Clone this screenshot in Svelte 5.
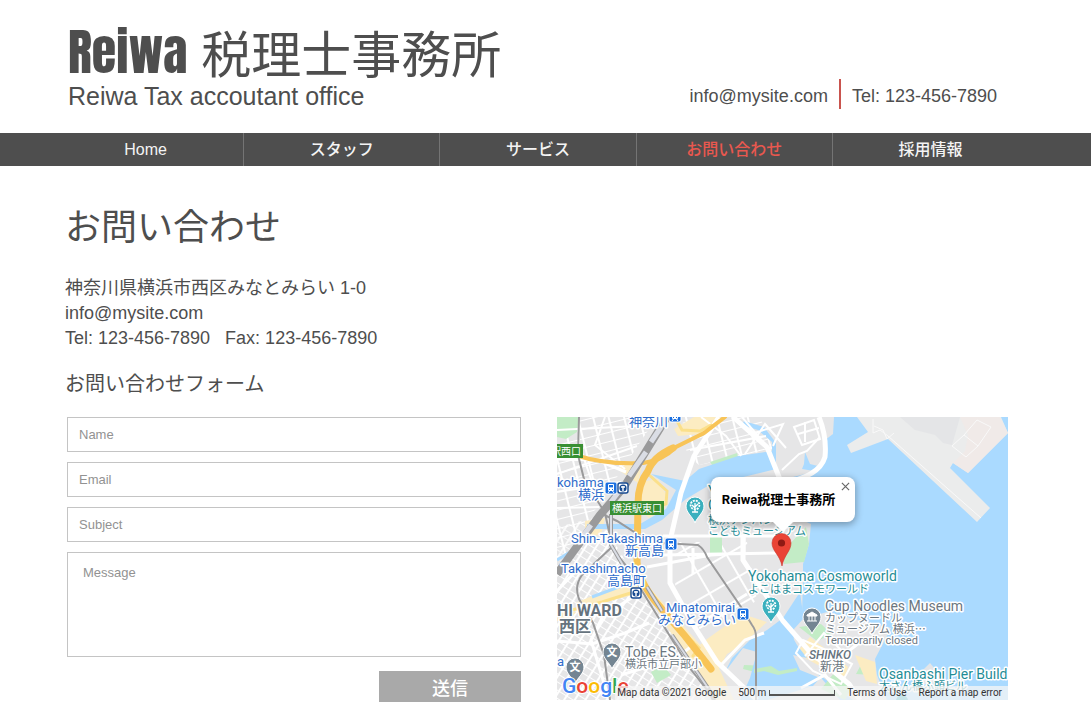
<script lang="ts">
  // Contact page for the tax office: header, main nav, address, form and map.
  const navItems = [
    { label: 'Home', href: '#home' },
    { label: 'スタッフ', href: '#staff' },
    { label: 'サービス', href: '#services' },
    { label: 'お問い合わせ', href: '#contact' },
    { label: '採用情報', href: '#recruit' },
  ];
  const current = '#contact';

  // Map labels, in the map's own 451 x 283 units.
  const labels = [
    { x: 72, y: 9, kind: 'station', size: 13, text: '神奈川' },
    { x: 0, y: 70, kind: 'station', size: 13, text: 'kohama' },
    { x: 21, y: 82, kind: 'station', size: 13, text: '横浜' },
    { x: 14, y: 126, kind: 'station', size: 13, text: 'Shin-Takashima' },
    { x: 68, y: 138, kind: 'station', size: 13, text: '新高島' },
    { x: 4, y: 156, kind: 'station', size: 13, text: 'Takashimacho' },
    { x: 50, y: 168, kind: 'station', size: 13, text: '高島町' },
    { x: 109, y: 195, kind: 'station', size: 13, text: 'Minatomirai' },
    { x: 101, y: 207, kind: 'station', size: 13, text: 'みなとみらい' },
    { x: 0, y: 249, kind: 'station', size: 13, text: 'a' },
    { x: 0, y: 199, kind: 'ward', size: 16, text: 'HI WARD' },
    { x: 2, y: 215, kind: 'ward', size: 16, text: '西区' },
    { x: 68, y: 240, kind: 'place', size: 14, text: 'Tobe ES.' },
    { x: 68, y: 251, kind: 'place', size: 11, text: '横浜市立戸部小' },
    { x: 151, y: 79, kind: 'sight', size: 14, text: 'Y' },
    { x: 151, y: 93, kind: 'sight', size: 14, text: 'C' },
    { x: 151, y: 107, kind: 'sight', size: 11, text: '横浜アンパンマン' },
    { x: 151, y: 118, kind: 'sight', size: 11, text: 'こどもミュージアム' },
    { x: 191, y: 164, kind: 'sight', size: 14, text: 'Yokohama Cosmoworld' },
    { x: 191, y: 176, kind: 'sight', size: 11, text: 'よこはまコスモワールド' },
    { x: 268, y: 194, kind: 'place', size: 14, text: 'Cup Noodles Museum' },
    { x: 268, y: 205, kind: 'place', size: 11, text: 'カップヌードル' },
    { x: 268, y: 216, kind: 'place', size: 11, text: 'ミュージアム 横浜⋯' },
    { x: 268, y: 227, kind: 'place', size: 11, text: 'Temporarily closed' },
    { x: 252, y: 242, kind: 'district', size: 12, text: 'SHINKO' },
    { x: 263, y: 254, kind: 'place', size: 12, text: '新港' },
    { x: 322, y: 262, kind: 'sight', size: 14, text: 'Osanbashi Pier Build' },
    { x: 322, y: 273, kind: 'sight', size: 11, text: '大さん橋ふ頭ビル' },
  ];

  const stations = [
    { x: 118, y: -1 },
    { x: 54, y: 71 },
    { x: 114, y: 127 },
    { x: 186, y: 197 },
  ];
  const subways = [
    { x: 66, y: 71 },
    { x: 79, y: 176 },
  ];

  let popupOpen = $state(true);
</script>

<div class="page">
  <header class="bar">
    <div class="inner head">
      <div class="brand">
        <div class="name"><span class="latin">Reiwa</span> 税理士事務所</div>
        <div class="tagline">Reiwa Tax accoutant office</div>
      </div>
      <div class="contact">
        <a href="mailto:info@mysite.com">info@mysite.com</a>
        <span class="tel">Tel: 123-456-7890</span>
      </div>
    </div>
  </header>

  <nav class="bar">
    <ul class="inner">
      {#each navItems as item}
        <li>
          <a href={item.href} class:active={item.href === current}>{item.label}</a>
        </li>
      {/each}
    </ul>
  </nav>

  <main class="bar">
    <div class="inner">
      <div class="intro">
        <h1>お問い合わせ</h1>
        <address>
          神奈川県横浜市西区みなとみらい 1-0<br />
          <a href="mailto:info@mysite.com">info@mysite.com</a><br />
          Tel: 123-456-7890 &nbsp; Fax: 123-456-7890
        </address>
        <h2>お問い合わせフォーム</h2>
      </div>

      <div class="columns">
        <form onsubmit={(e) => e.preventDefault()}>
          <input type="text" placeholder="Name" aria-label="Name" />
          <input type="email" placeholder="Email" aria-label="Email" />
          <input type="text" placeholder="Subject" aria-label="Subject" />
          <textarea placeholder="Message" aria-label="Message"></textarea>
          <button class="send" type="submit">送信</button>
        </form>

        <section class="map" aria-label="Map">
          <svg class="canvas" viewBox="0 0 451 283">
            <defs>
              <pattern id="streets" width="15" height="9" patternUnits="userSpaceOnUse" patternTransform="rotate(-14)">
                <path d="M0 0H15M5 0V9" stroke="#fff" stroke-width="2" fill="none" />
              </pattern>
              <pattern id="alleys" width="9" height="7" patternUnits="userSpaceOnUse" patternTransform="rotate(32)">
                <path d="M0 0H9M3 0V7" stroke="#fff" stroke-width="2" fill="none" />
              </pattern>
              <pattern id="blocks" width="34" height="25" patternUnits="userSpaceOnUse" patternTransform="rotate(-30)">
                <path d="M0 4H34M10 0V25" stroke="#fff" stroke-width="2" fill="none" />
              </pattern>
              <symbol id="tree" viewBox="0 0 20 28">
                <path
                  d="M10 27C8 21 1 17 1 10a9 9 0 0 1 18 0c0 7-7 11-9 17z"
                  fill="#3bb0be"
                  stroke="#fff"
                />
                <g fill="none" stroke="#fff">
                  <circle cx="10" cy="9" r="4.4" stroke-width="1.8" stroke-dasharray="2 1" />
                  <path d="M10 16V7M10 12l-3-3M10 11l3-3M7 16h6" stroke-width="1.3" />
                </g>
              </symbol>
              <symbol id="pin-grey" viewBox="0 0 20 28">
                <path
                  d="M10 27C8 21 1 17 1 10a9 9 0 0 1 18 0c0 7-7 11-9 17z"
                  fill="#748592"
                  stroke="#fff"
                />
              </symbol>
            </defs>

            <rect width="451" height="283" fill="#aadaff" />

            <!-- Land -->
            <path
              fill="#e6e6e7"
              d="M0 0H277L276 17 268 23 270 40 256 55 236 60 245 103 254 107 252 127 246 147 246 165 245 197 232 208 236 228 283 283H0z"
            />
            <path
              fill="#e6e6e7"
              d="M237 212L246 202 270 195 334 211 318 242 320 258 330 283H296L236 238z"
            />
            <path
              fill="#ebecec"
              d="M300 0L311 15 290 28 294 36 331 22 420 105 433 91 393 51 396 46 411 56 451 16 444 0z"
            />
            <path fill="#e4e5e7" d="M343 0H403L395 28 386 26 378 18 358 13z" />
            <path fill="#f0eae8" d="M403 0H443L451 16 411 56 396 46 408 34 411 18z" />
            <path fill="#e4e5e7" d="M366 253L373 246 379 253 376 267H366z" />

            <path fill="url(#streets)" d="M0 0H100L0 150zM125 0H203L216 32 142 48 130 38z" />
            <path fill="url(#alleys)" d="M0 153L25 120 50 113 90 180 150 270 155 283H0z" />
            <path fill="url(#blocks)" d="M119 125H190L200 183 150 222 118 178z" />
            <path fill="url(#alleys)" d="M0 110L48 98 40 110 0 147z" opacity=".8" />

            <!-- Parks -->
            <g fill="#c3ecc6">
              <path d="M0 0H22L20 15 9 22 0 20zM153 45L180 36 184 51 160 55zM249 110L252 127 247 145 227 147 226 134z" />
              <path d="M153 120H165V136H153zM242 210L264 207 275 217 260 224zM94 255L106 248 114 258 100 266z" />
              <path d="M264 272L278 255 294 272 288 283zM187 248L236 250 239 256 214 259 186 252zM299 257L307 242 317 246 315 258z" />
            </g>

            <!-- Commercial blocks -->
            <g fill="#fcecc2">
              <path d="M83 65L101 62 109 78 108 91 92 101 84 94zM117 12L137 0H164L143 17 121 19zM60 52L87 39 81 66z" />
              <path d="M150 222L185 197 210 205 185 228 170 237 161 253 138 232zM253 220L270 233 291 250 288 260 270 253 239 236z" />
              <path d="M86 163L160 247 177 283H158L105 202zM28 104L48 101 44 118 28 118zM298 238L318 245 320 267 309 264z" />
              <path d="M18 186L75 163 83 168 76 178 29 190zM0 193L19 195 11 205 0 204z" />
            </g>

            <!-- Harbour and canals -->
            <path
              fill="#aadaff"
              d="M94 57L128 64 142 52 181 39 215 34 215 25 201 13 185 8 187 4 207 10 219 26 219 52 178 62 154 67 129 82 105 103 88 112 31 112 30 107 83 107 109 92 119 73z"
            />
            <path
              fill="#aadaff"
              d="M243 175L246 197 230 210 240 228 250 241 236 238 243 253 263 261 256 269 210 283H183L193 261 200 235 186 231 168 255 175 241 193 223 210 213 226 201z"
            />
            <path fill="#aadaff" d="M248 35L253 47 261 49 257 54 245 52 247 47z" />
            <path
              d="M35 180L67 168M0 143L23 129"
              stroke="#aadaff"
              stroke-width="3"
              fill="none"
            />
            <path fill="#c3ecc6" d="M197 252L214 249 222 254 240 251 240 254 221 258 207 254 197 256z" />

            <!-- Local roads -->
            <g fill="none" stroke="#fff">
              <path stroke-width="2" d="M0 13L100 8M0 57L80 29M0 75L64 65M22 0V27L47 100M48 0L38 28 68 52M0 91L42 90" />
              <path stroke-width="2" d="M133 33L209 19M144 0L169 19 184 39M188 37L208 7 229 31M194 17L226 7 216 29M185 0L212 32" />
              <path stroke-width="2" d="M237 10L257 3 263 22 245 28zM248 5V25M241 17L262 11M225 53L242 37 250 34 262 21" />
              <path stroke-width="2" d="M239 236L246 223 269 233 295 247 284 267 256 254zM248 239L267 216 285 234" />
              <path stroke-width="3" d="M106 119H225V108M105 138L220 136M136 131V157M90 150L154 138 187 136V120" />
              <path stroke-width="5" d="M162 0L137 39 124 76 113 124 113 166 137 209 160 245 200 283" />
              <path stroke-width="5" stroke-linejoin="round" d="M176 0L210 30 226 70M262 0Q270 20 268 40 262 60 225 66" />
              <path stroke-width="5" d="M186 120V143L226 204 253 235 292 267 303 283" />
              <path stroke-width="3" d="M137 210L190 177M164 248L188 223 207 216M0 42L40 43 69 55M18 155L0 174M76 180L46 199 34 223 52 283" />
              <path stroke-width="3" d="M284 240L302 226M244 271L268 258 284 278M0 224L35 227 68 216 92 206M64 258L119 241 139 226" />
            </g>
            <g fill="none" stroke="#f9f9f9">
              <path d="M316 2V16L323 13 331 19 424 101M317 9L326 13 330 22 337 16M395 29L407 18 421 29 409 40zM407 18L420 3 434 10 421 29" />
            </g>

            <!-- Highways -->
            <g fill="none" stroke-linecap="round">
              <path stroke="#fbe08b" stroke-width="3" d="M118 0L125 13 143 14 154 8M83 96L109 87 110 74 91 57M127 216L142 231 136 239M80 174L45 185 15 193" />
              <path stroke="#f8c457" stroke-width="4" d="M18 38Q49 48 86 46Q105 44 119 30L147 16 168 0" />
              <path stroke="#f8c457" stroke-width="7" d="M116 31Q96 40 91 54Q81 67 81 86L80 145Q81 162 98 184L128 219 154 252" />
            </g>

            <!-- Railways -->
            <g fill="none">
              <path stroke="#9a9a9b" stroke-width="8" d="M110 0L67 70 43 98 0 157" />
              <path stroke="#dadde5" stroke-width="5" d="M104 10L94 25M89 35L72 59M68 66L54 85M34 108L20 127" />
              <path stroke="#9a9a9b" stroke-width="2" d="M22 0L21 38 27 62 48 96 56 133 71 151 90 182 132 250 158 283" />
              <path stroke="#9a9a9b" stroke-width="2" d="M43 96L60 104 82 118 104 126 141 128Q147 132 150 140L184 190 195 208Q199 213 199 220V283" />
              <path stroke="#9a9a9b" stroke-width="2" d="M56 129L25 158Q17 169 22 182L36 206 47 238 53 283" />
              <path stroke="#9a9a9b" stroke-width="4" d="M54 97L54 128 67 150M90 170L105 194M115 218L151 271 157 283" />
              <path stroke="#dadde5" stroke-width="2" d="M54 97L54 128 67 150M90 170L105 194M115 218L151 271" />
            </g>

            <!-- Road signs -->
            <g>
              <rect y="27" width="26" height="14" fill="#388f33" />
              <text class="sign" x="-6" y="38">駅西口</text>
              <rect x="53" y="84" width="54" height="14" fill="#388f33" />
              <text class="sign" x="55" y="95">横浜駅東口</text>
            </g>

            {#each labels as label}
              <text class="label {label.kind}" x={label.x} y={label.y} font-size={label.size}>{label.text}</text>
            {/each}

            {#each stations as s}
              <g transform="translate({s.x} {s.y})">
                <rect x="-6" y="-6" width="12" height="12" rx="2" fill="#1a6fe0" stroke="#fff" />
                <rect x="-3" y="-4" width="6" height="7" rx="1" fill="#fff" />
                <rect x="-2" y="-3" width="4" height="2.400" fill="#1a6fe0" />
                <path d="M-2 1.500H-1M1 1.500H2" stroke="#1a6fe0" />
                <path d="M-3 5L-1.500 3M3 5L1.500 3" stroke="#fff" />
              </g>
            {/each}
            {#each subways as s}
              <g transform="translate({s.x} {s.y})">
                <rect x="-5" y="-5" width="10" height="10" rx="2" fill="#fff" stroke="#174a91" stroke-width="1.4" />
                <circle r="3.6" fill="#174a91" />
                <path d="M0 -2V3M-2 -1H2" stroke="#fff" stroke-width="1.4" />
              </g>
            {/each}

            <use href="#tree" x="128" y="79" width="20" height="28" />
            <use href="#tree" x="204" y="179" width="20" height="28" />
            <use href="#pin-grey" x="45" y="225" width="20" height="28" />
            <use href="#pin-grey" x="8" y="240" width="20" height="28" />
            <use href="#pin-grey" x="245" y="190" width="20" height="28" />
            <text class="kanji" x="55" y="239">文</text>
            <text class="kanji" x="18" y="254">文</text>
            <path
              d="M250 198L255 195 260 198V199H250zM250 204H260M252 199V204M255 199V204M258 199V204"
              fill="#fff"
              stroke="#fff"
            />
            <circle cx="345" cy="284" r="6" fill="#3bb0be" />

            <text class="google" x="5" y="276">
              <tspan fill="#4285f4">G</tspan><tspan fill="#ea4335">o</tspan><tspan fill="#fbbc05">o</tspan><tspan
                fill="#4285f4">g</tspan
              ><tspan fill="#34a853">l</tspan><tspan fill="#ea4335">e</tspan>
            </text>

            <path
              d="M225 149C223 138 215 134 215 126a9.500 9.500 0 0 1 19 0c0 8-7 12-9 23z"
              fill="#ea4335"
              stroke="#c8352b"
              stroke-width=".6"
            />
            <circle cx="224.500" cy="126" r="3.600" fill="#8f1a14" />
          </svg>

          {#if popupOpen}
            <div class="popup">
              <strong>Reiwa税理士事務所</strong>
              <button type="button" aria-label="Close" onclick={() => (popupOpen = false)}>
                <svg viewBox="0 0 10 10"><path d="M1 1L9 9M9 1L1 9" /></svg>
              </button>
            </div>
          {/if}

          <div class="credits">
            <span>Map data ©2021 Google</span>
            <span class="scale">500 m <i></i></span>
            <a href="#terms">Terms of Use</a>
            <a href="#report">Report a map error</a>
          </div>
        </section>
      </div>
    </div>
  </main>
</div>

<style>
  :global(body) {
    background: #fff;
  }

  .page {
    --ink: #4e4e4e;
    --accent: #e9584f;
    --sans: 'Liberation Sans', 'Noto Sans CJK JP', sans-serif;
    --map-font: Roboto, 'Noto Sans CJK JP', sans-serif;
    color: var(--ink);
    font-family: var(--sans);
    font-size: 18px;
    line-height: 25px;
  }

  a {
    color: inherit;
    text-decoration: none;
  }

  .bar {
    padding-right: 15px;
  }

  .inner {
    box-sizing: border-box;
    max-width: 980px;
    margin: 0 auto;
  }

  .head {
    display: flex;
    justify-content: space-between;
    align-items: flex-end;
    padding: 24px 31px 24px 20px;
  }

  .name {
    font-size: 50px;
    line-height: 56px;
  }

  .latin {
    font-family: Anton, Impact, 'Liberation Sans Narrow', 'Liberation Sans', sans-serif;
    font-weight: 400;
  }

  .tagline {
    font-size: 25px;
    line-height: 25px;
  }

  .contact {
    display: flex;
    align-items: flex-end;
  }

  .tel {
    margin-left: 11px;
    padding: 5px 0 0 11px;
    border-left: 2px solid #c9544e;
  }

  nav {
    background: var(--ink);
  }

  nav ul {
    display: flex;
    padding: 0;
    list-style: none;
  }

  nav li {
    flex: 1;
    text-align: center;
  }

  nav li + li {
    border-left: 1px solid #747474;
  }

  nav a {
    display: block;
    color: #f4f4f4;
    font-size: 16px;
    font-weight: 500;
    line-height: 33px;
  }

  nav a.active {
    color: var(--accent);
  }

  .intro {
    padding: 37px 17px 0;
  }

  h1,
  h2 {
    margin: 0;
    font-weight: 400;
  }

  h1 {
    font-size: 36px;
    line-height: 50px;
  }

  address {
    margin: 23px 0 21px;
    font-style: normal;
  }

  h2 {
    font-size: 20px;
    line-height: 25px;
  }

  .columns {
    display: grid;
    grid-template-columns: 454fr 451fr;
    gap: 36px;
    align-items: start;
    padding: 20px 20px 20px 19px;
  }

  form {
    display: flex;
    flex-direction: column;
    gap: 10px;
  }

  input,
  textarea {
    box-sizing: border-box;
    width: 100%;
    height: 35px;
    margin: 0;
    padding: 0 11px;
    border: 1px solid #c4c4c4;
    border-radius: 0;
    background: #fff;
    color: var(--ink);
    font: 13px var(--sans);
  }

  textarea {
    height: 105px;
    padding: 12px 15px;
    resize: none;
  }

  input::placeholder,
  textarea::placeholder {
    color: #929292;
    opacity: 1;
  }

  .send {
    align-self: flex-end;
    width: 142px;
    height: 31px;
    margin-top: 4px;
    padding: 0;
    border: 0;
    background: #a9a9a9;
    color: #fff;
    font: 500 18px var(--sans);
  }

  .map {
    position: relative;
    overflow: hidden;
    font-family: var(--map-font);
  }

  .canvas {
    display: block;
    width: 100%;
  }

  .label {
    paint-order: stroke;
    stroke: #fff;
    stroke-width: 3px;
    stroke-linejoin: round;
  }

  .station {
    fill: #2f6dcb;
  }

  .sight {
    fill: #1f8d97;
  }

  .place {
    fill: #6b7680;
  }

  .ward {
    fill: #66737e;
    font-weight: 700;
  }

  .district {
    fill: #66737e;
    font-style: italic;
    font-weight: 500;
  }

  .sign {
    fill: #fff;
    font-size: 10px;
  }

  .kanji {
    fill: #fff;
    font-size: 11px;
    font-weight: 700;
    text-anchor: middle;
  }

  .google {
    font-size: 21px;
    font-weight: 500;
    paint-order: stroke;
    stroke: #fff;
    stroke-width: 2px;
  }

  .popup {
    position: absolute;
    top: 60px;
    left: 50%;
    display: flex;
    align-items: center;
    justify-content: center;
    box-sizing: border-box;
    width: 144px;
    height: 45px;
    margin-left: -72px;
    border-radius: 8px;
    background: #fff;
    box-shadow: 0 2px 7px 1px rgb(0 0 0 / 30%);
    color: #000;
    font-size: 13px;
  }

  .popup::after {
    position: absolute;
    top: 100%;
    left: 50%;
    margin-left: -10px;
    border: 10px solid transparent;
    border-top-color: #fff;
    border-bottom: 0;
    content: '';
  }

  .popup strong {
    margin-right: 8px;
    white-space: nowrap;
  }

  .popup button {
    position: absolute;
    top: 5px;
    right: 5px;
    width: 9px;
    height: 9px;
    padding: 0;
    border: 0;
    background: none;
  }

  .popup button svg {
    display: block;
    fill: none;
    stroke: #666;
    stroke-width: 1.3;
  }

  .credits {
    position: absolute;
    right: 0;
    bottom: 0;
    display: flex;
    gap: 12px;
    padding: 0 6px 0 2px;
    background: rgb(245 245 245 / 75%);
    color: #333;
    font-size: 10px;
    line-height: 14px;
    white-space: nowrap;
  }

  .scale {
    display: flex;
    align-items: center;
    gap: 3px;
  }

  .scale i {
    width: 64px;
    height: 4px;
    border: solid #555;
    border-width: 0 1px 2px;
  }
</style>
